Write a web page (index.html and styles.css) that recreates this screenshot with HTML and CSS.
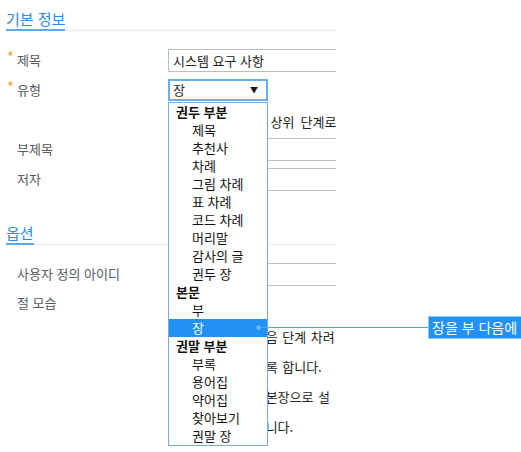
FILE: index.html
```html
<!DOCTYPE html>
<html lang="ko">
<head>
<meta charset="utf-8">
<title>문서 속성</title>
<link rel="stylesheet" href="styles.css">
</head>
<body>
<div class="page">
  <div class="form">
    <h2 class="sec"><span>기본 정보</span></h2>

    <div class="row first">
      <label class="lbl req-lbl"><i class="req">*</i>제목</label>
      <div class="ctl"><div class="input">시스템 요구 사항</div></div>
    </div>

    <div class="row">
      <label class="lbl req-lbl short"><i class="req">*</i>유형</label>
      <div class="ctl">
        <div class="select">장<span class="arrow">▼</span></div>
        <p class="help">이 유형은 문서의 상위 단계로 나뉩니다.</p>
      </div>
    </div>

    <div class="row">
      <label class="lbl">부제목</label>
      <div class="ctl"><div class="input"></div></div>
    </div>

    <div class="row">
      <label class="lbl">저자</label>
      <div class="ctl"><div class="input"></div></div>
    </div>

    <h2 class="sec sec2"><span>옵션</span></h2>

    <div class="row first">
      <label class="lbl">사용자 정의 아이디</label>
      <div class="ctl"><div class="input"></div></div>
    </div>

    <div class="row r-sect">
      <label class="lbl">절 모습</label>
      <div class="ctl">
        <div class="select plain">기본</div>
        <p class="desc d1">절은 장 안에서 다음 단계 차려</p>
        <p class="desc">각 절 번호를 달도록 합니다.</p>
        <p class="desc">첫째 절은 언제나 본장으로 설</p>
        <p class="desc">그 외 절은 표시합니다.</p>
      </div>
    </div>
  </div>

  <ul class="dropdown">
    <li class="grp">권두 부분</li>
    <li class="opt">제목</li>
    <li class="opt">추천사</li>
    <li class="opt">차례</li>
    <li class="opt">그림 차례</li>
    <li class="opt">표 차례</li>
    <li class="opt">코드 차례</li>
    <li class="opt">머리말</li>
    <li class="opt">감사의 글</li>
    <li class="opt">권두 장</li>
    <li class="grp">본문</li>
    <li class="opt">부</li>
    <li class="opt selected">장</li>
    <li class="grp">권말 부분</li>
    <li class="opt">부록</li>
    <li class="opt">용어집</li>
    <li class="opt">약어집</li>
    <li class="opt">찾아보기</li>
    <li class="opt">권말 장</li>
  </ul>

  <div class="connector"><span class="dot"></span></div>
  <div class="tip">장을 부 다음에 배치합니다</div>
</div>
</body>
</html>
```

FILE: styles.css
```css
html, body {
  margin: 0;
  padding: 0;
  background: #ffffff;
}

body {
  font-family: "Noto Sans CJK KR", "Noto Sans", sans-serif;
  font-size: 13px;
  color: #333333;
}

.page {
  position: relative;
  width: 521px;
  height: 452px;
  overflow: hidden;
}

.form {
  margin-left: 6px;
  width: 330px;
  overflow: hidden;
}

.sec {
  margin: 0;
  padding-top: 9px;
  font-size: 15px;
  font-weight: normal;
  line-height: 20px;
  color: #2a8ae6;
  border-bottom: 1px solid #e2ecf6;
}

.sec span {
  display: inline-block;
  border-bottom: 2px solid #5aaaf0;
  margin-bottom: -1px;
}

.sec2 {
  margin-top: 23px;
}

.row {
  display: grid;
  grid-template-columns: 162px 1fr;
  align-items: start;
  margin-top: 7px;
}

.row.first {
  margin-top: 18px;
}

.row.r-sect {
  margin-top: 6px;
}

.lbl {
  display: block;
  padding-left: 11px;
  line-height: 22px;
  color: #555b62;
  white-space: nowrap;
}

.lbl.short {
  line-height: 21px;
}

.lbl.req-lbl {
  padding-left: 1px;
}

.req {
  display: inline-block;
  width: 10px;
  font-style: normal;
  font-size: 15px;
  color: #f5a52a;
  line-height: 16px;
  vertical-align: top;
}

.ctl {
  min-width: 0;
}

.input {
  box-sizing: border-box;
  width: 240px;
  height: 23px;
  border: 1px solid #b3c0c8;
  padding: 0 4px;
  line-height: 21px;
  color: #222222;
  white-space: nowrap;
}

.select {
  box-sizing: border-box;
  width: 100px;
  height: 22px;
  border: 2px solid #64b0f0;
  padding: 0 3px;
  line-height: 18px;
  color: #222222;
  display: flex;
  justify-content: space-between;
  align-items: center;
}

.select.plain {
  border: 1px solid #b3c0c8;
}

.arrow {
  font-size: 8px;
  line-height: 18px;
  margin-right: 5px;
  color: #111111;
}

.help,
.desc {
  margin: 12px 0 0;
  line-height: 18px;
  color: #222222;
  white-space: nowrap;
  word-spacing: 1px;
}

.help {
  word-spacing: 2.6px;
}

.desc.d1 {
  margin-top: 14px;
}

.dropdown {
  position: absolute;
  left: 168px;
  top: 102px;
  box-sizing: border-box;
  width: 100px;
  margin: 0;
  padding: 0;
  list-style: none;
  background: #ffffff;
  border: 1px solid #7ea8e0;
  color: #111111;
}

.dropdown li {
  height: 18px;
  line-height: 18px;
  white-space: nowrap;
}

.dropdown .grp {
  padding-left: 7px;
  font-weight: bold;
}

.dropdown .opt {
  padding-left: 23px;
}

.dropdown .selected {
  background: #2291f4;
  color: #ffffff;
}

.connector {
  position: absolute;
  left: 258px;
  top: 327px;
  width: 170px;
  height: 1px;
  background: #4aa6f2;
}

.dot {
  position: absolute;
  left: -2px;
  top: -2px;
  width: 5px;
  height: 5px;
  border-radius: 50%;
  background: #5fb2f5;
}

.tip {
  position: absolute;
  left: 428px;
  top: 316px;
  height: 23px;
  box-sizing: border-box;
  padding: 0 3px;
  border: 1px solid #8cc8f8;
  background: #2291f4;
  color: #ffffff;
  font-size: 14px;
  line-height: 21px;
  white-space: nowrap;
}
```
